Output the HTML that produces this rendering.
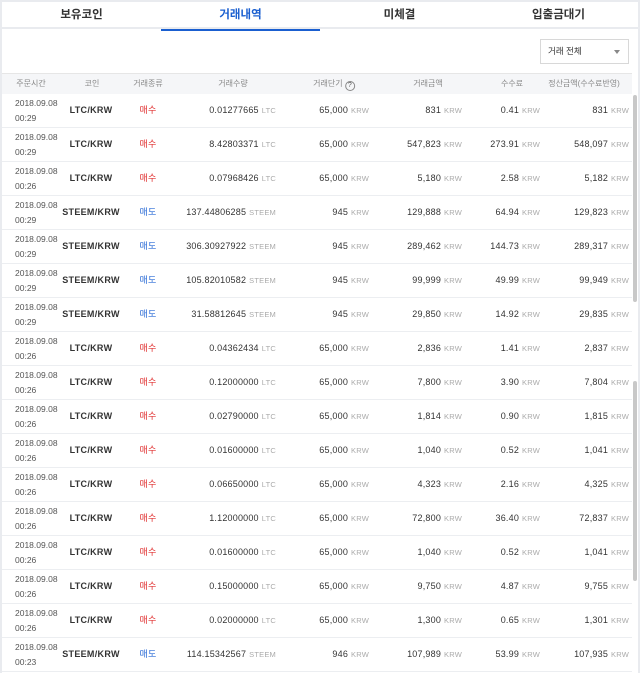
<!DOCTYPE html>
<html><head><meta charset="utf-8"><style>
*{margin:0;padding:0;box-sizing:border-box}
body{width:640px;height:673px;overflow:hidden;background:#fff;font-family:"Liberation Sans","Noto Sans CJK KR",sans-serif;position:relative;color:#333}
.lb{position:absolute;left:0;top:0;width:2px;height:673px;background:#e9ebef}
.rb{position:absolute;right:0;top:0;width:2px;height:673px;background:#e9ebef}
.tt{position:absolute;left:0;top:0;width:640px;height:2px;background:#e9ebef}
.tabs{position:absolute;left:2px;top:2px;width:636px;height:27px;border-bottom:2px solid #e9ebef}
.tab{position:absolute;top:0;height:27px;line-height:27px;text-align:center;font-size:11.5px;font-weight:bold;color:#333;width:159px}
.tab.on{color:#1a5fd0;border-bottom:2px solid #1a5fd0;height:29px}
.sel{position:absolute;left:540px;top:39px;width:89px;height:25px;border:1px solid #d8d8d8;font-size:8.5px;line-height:23px;padding-left:7px;color:#333}
.sel:after{content:"";position:absolute;right:8px;top:10px;border:3.5px solid transparent;border-top:4px solid #888}
.hd{position:absolute;left:2px;top:73px;width:630px;height:21px;background:#f5f6f8;border-top:1px solid #e6e6e6}
.h{position:absolute;top:78px;font-size:8px;color:#888;transform:translateX(-50%);white-space:nowrap}
.q{display:inline-block;width:10px;height:10px;border:1px solid #888;border-radius:50%;font-size:7px;line-height:8px;text-align:center;color:#555;vertical-align:-1px}
.r{position:absolute;left:2px;width:630px;height:34px;border-bottom:1px solid #eceef1}
.r div{position:absolute;top:0;height:33px;line-height:33px;white-space:nowrap;font-size:9px;letter-spacing:0.2px}
.t{left:13px;line-height:15px!important;padding-top:2px;font-size:8.5px!important;color:#555;letter-spacing:0!important}
.c{left:56px;width:66px;text-align:center;font-weight:bold;color:#333;letter-spacing:0.3px!important}
.k{left:122px;width:48px;text-align:center}
.b{color:#e03030}.s{color:#2a6bd6}
.n1{right:356px}.n2{right:263px}.n3{right:170px}.n4{right:92px}.n5{right:3px}
.u{color:#aaa;font-size:7.5px;margin-left:3px}
.sb{position:absolute;left:633px;width:4px;background:#c8c8c8;border-radius:2px}
</style></head><body>
<div class="tt"></div><div class="lb"></div><div class="rb"></div>
<div class="tabs">
<div class="tab" style="left:0">보유코인</div>
<div class="tab on" style="left:159px">거래내역</div>
<div class="tab" style="left:318px">미체결</div>
<div class="tab" style="left:477px">입출금대기</div>
</div>
<div class="sel">거래 전체</div>
<div class="hd"></div>
<div class="h" style="left:31px">주문시간</div>
<div class="h" style="left:92px">코인</div>
<div class="h" style="left:148px">거래종류</div>
<div class="h" style="left:233px">거래수량</div>
<div class="h" style="left:334px">거래단기 <span class="q">?</span></div>
<div class="h" style="left:428px">거래금액</div>
<div class="h" style="left:512px">수수료</div>
<div class="h" style="left:584px">정산금액(수수료반영)</div>

<div class="r" style="top:94px"><div class="t">2018.09.08<br>00:29</div><div class="c">LTC/KRW</div><div class="k b">매수</div><div class="n1">0.01277665<span class="u">LTC</span></div><div class="n2">65,000<span class="u">KRW</span></div><div class="n3">831<span class="u">KRW</span></div><div class="n4">0.41<span class="u">KRW</span></div><div class="n5">831<span class="u">KRW</span></div></div>
<div class="r" style="top:128px"><div class="t">2018.09.08<br>00:29</div><div class="c">LTC/KRW</div><div class="k b">매수</div><div class="n1">8.42803371<span class="u">LTC</span></div><div class="n2">65,000<span class="u">KRW</span></div><div class="n3">547,823<span class="u">KRW</span></div><div class="n4">273.91<span class="u">KRW</span></div><div class="n5">548,097<span class="u">KRW</span></div></div>
<div class="r" style="top:162px"><div class="t">2018.09.08<br>00:26</div><div class="c">LTC/KRW</div><div class="k b">매수</div><div class="n1">0.07968426<span class="u">LTC</span></div><div class="n2">65,000<span class="u">KRW</span></div><div class="n3">5,180<span class="u">KRW</span></div><div class="n4">2.58<span class="u">KRW</span></div><div class="n5">5,182<span class="u">KRW</span></div></div>
<div class="r" style="top:196px"><div class="t">2018.09.08<br>00:29</div><div class="c">STEEM/KRW</div><div class="k s">매도</div><div class="n1">137.44806285<span class="u">STEEM</span></div><div class="n2">945<span class="u">KRW</span></div><div class="n3">129,888<span class="u">KRW</span></div><div class="n4">64.94<span class="u">KRW</span></div><div class="n5">129,823<span class="u">KRW</span></div></div>
<div class="r" style="top:230px"><div class="t">2018.09.08<br>00:29</div><div class="c">STEEM/KRW</div><div class="k s">매도</div><div class="n1">306.30927922<span class="u">STEEM</span></div><div class="n2">945<span class="u">KRW</span></div><div class="n3">289,462<span class="u">KRW</span></div><div class="n4">144.73<span class="u">KRW</span></div><div class="n5">289,317<span class="u">KRW</span></div></div>
<div class="r" style="top:264px"><div class="t">2018.09.08<br>00:29</div><div class="c">STEEM/KRW</div><div class="k s">매도</div><div class="n1">105.82010582<span class="u">STEEM</span></div><div class="n2">945<span class="u">KRW</span></div><div class="n3">99,999<span class="u">KRW</span></div><div class="n4">49.99<span class="u">KRW</span></div><div class="n5">99,949<span class="u">KRW</span></div></div>
<div class="r" style="top:298px"><div class="t">2018.09.08<br>00:29</div><div class="c">STEEM/KRW</div><div class="k s">매도</div><div class="n1">31.58812645<span class="u">STEEM</span></div><div class="n2">945<span class="u">KRW</span></div><div class="n3">29,850<span class="u">KRW</span></div><div class="n4">14.92<span class="u">KRW</span></div><div class="n5">29,835<span class="u">KRW</span></div></div>
<div class="r" style="top:332px"><div class="t">2018.09.08<br>00:26</div><div class="c">LTC/KRW</div><div class="k b">매수</div><div class="n1">0.04362434<span class="u">LTC</span></div><div class="n2">65,000<span class="u">KRW</span></div><div class="n3">2,836<span class="u">KRW</span></div><div class="n4">1.41<span class="u">KRW</span></div><div class="n5">2,837<span class="u">KRW</span></div></div>
<div class="r" style="top:366px"><div class="t">2018.09.08<br>00:26</div><div class="c">LTC/KRW</div><div class="k b">매수</div><div class="n1">0.12000000<span class="u">LTC</span></div><div class="n2">65,000<span class="u">KRW</span></div><div class="n3">7,800<span class="u">KRW</span></div><div class="n4">3.90<span class="u">KRW</span></div><div class="n5">7,804<span class="u">KRW</span></div></div>
<div class="r" style="top:400px"><div class="t">2018.09.08<br>00:26</div><div class="c">LTC/KRW</div><div class="k b">매수</div><div class="n1">0.02790000<span class="u">LTC</span></div><div class="n2">65,000<span class="u">KRW</span></div><div class="n3">1,814<span class="u">KRW</span></div><div class="n4">0.90<span class="u">KRW</span></div><div class="n5">1,815<span class="u">KRW</span></div></div>
<div class="r" style="top:434px"><div class="t">2018.09.08<br>00:26</div><div class="c">LTC/KRW</div><div class="k b">매수</div><div class="n1">0.01600000<span class="u">LTC</span></div><div class="n2">65,000<span class="u">KRW</span></div><div class="n3">1,040<span class="u">KRW</span></div><div class="n4">0.52<span class="u">KRW</span></div><div class="n5">1,041<span class="u">KRW</span></div></div>
<div class="r" style="top:468px"><div class="t">2018.09.08<br>00:26</div><div class="c">LTC/KRW</div><div class="k b">매수</div><div class="n1">0.06650000<span class="u">LTC</span></div><div class="n2">65,000<span class="u">KRW</span></div><div class="n3">4,323<span class="u">KRW</span></div><div class="n4">2.16<span class="u">KRW</span></div><div class="n5">4,325<span class="u">KRW</span></div></div>
<div class="r" style="top:502px"><div class="t">2018.09.08<br>00:26</div><div class="c">LTC/KRW</div><div class="k b">매수</div><div class="n1">1.12000000<span class="u">LTC</span></div><div class="n2">65,000<span class="u">KRW</span></div><div class="n3">72,800<span class="u">KRW</span></div><div class="n4">36.40<span class="u">KRW</span></div><div class="n5">72,837<span class="u">KRW</span></div></div>
<div class="r" style="top:536px"><div class="t">2018.09.08<br>00:26</div><div class="c">LTC/KRW</div><div class="k b">매수</div><div class="n1">0.01600000<span class="u">LTC</span></div><div class="n2">65,000<span class="u">KRW</span></div><div class="n3">1,040<span class="u">KRW</span></div><div class="n4">0.52<span class="u">KRW</span></div><div class="n5">1,041<span class="u">KRW</span></div></div>
<div class="r" style="top:570px"><div class="t">2018.09.08<br>00:26</div><div class="c">LTC/KRW</div><div class="k b">매수</div><div class="n1">0.15000000<span class="u">LTC</span></div><div class="n2">65,000<span class="u">KRW</span></div><div class="n3">9,750<span class="u">KRW</span></div><div class="n4">4.87<span class="u">KRW</span></div><div class="n5">9,755<span class="u">KRW</span></div></div>
<div class="r" style="top:604px"><div class="t">2018.09.08<br>00:26</div><div class="c">LTC/KRW</div><div class="k b">매수</div><div class="n1">0.02000000<span class="u">LTC</span></div><div class="n2">65,000<span class="u">KRW</span></div><div class="n3">1,300<span class="u">KRW</span></div><div class="n4">0.65<span class="u">KRW</span></div><div class="n5">1,301<span class="u">KRW</span></div></div>
<div class="r" style="top:638px"><div class="t">2018.09.08<br>00:23</div><div class="c">STEEM/KRW</div><div class="k s">매도</div><div class="n1">114.15342567<span class="u">STEEM</span></div><div class="n2">946<span class="u">KRW</span></div><div class="n3">107,989<span class="u">KRW</span></div><div class="n4">53.99<span class="u">KRW</span></div><div class="n5">107,935<span class="u">KRW</span></div></div>

<div class="sb" style="top:95px;height:207px"></div>
<div class="sb" style="top:381px;height:200px"></div>
</body></html>
